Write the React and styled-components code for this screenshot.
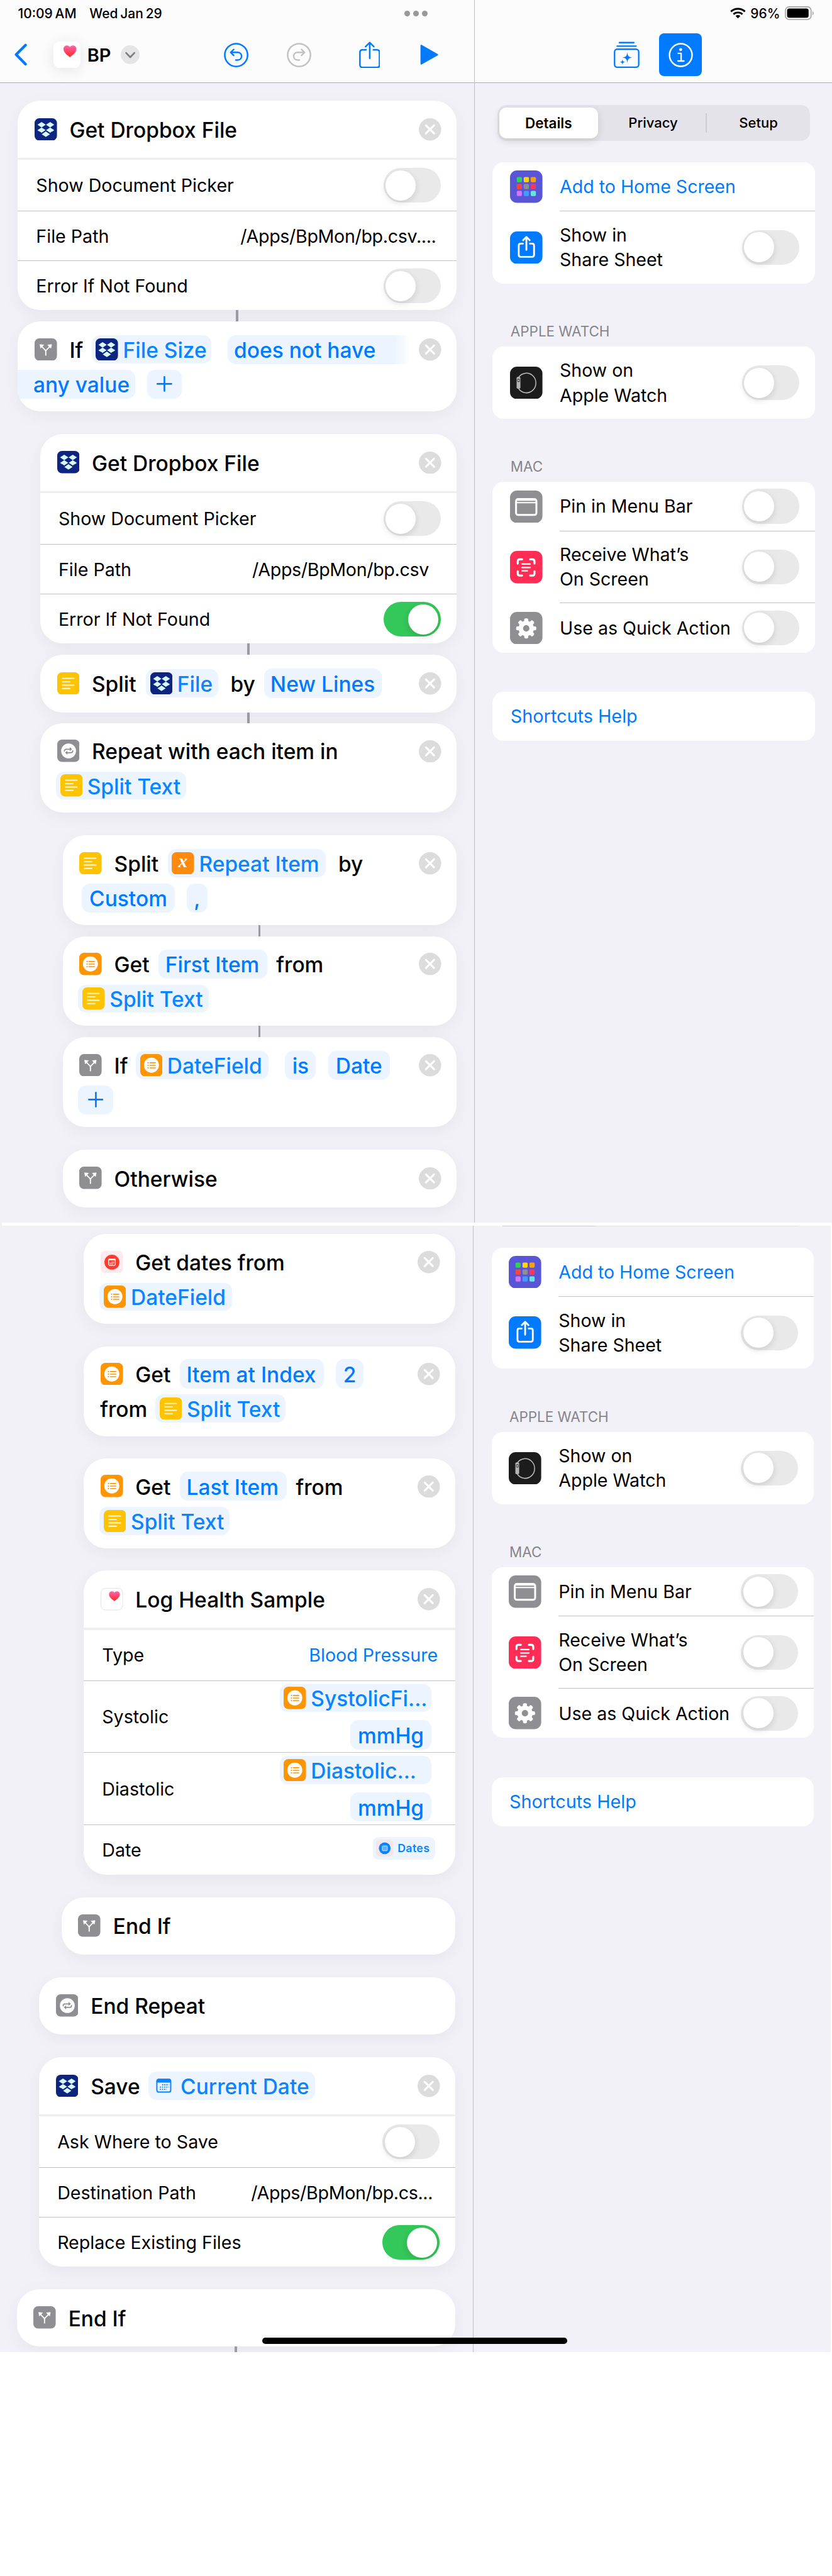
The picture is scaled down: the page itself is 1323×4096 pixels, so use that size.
import React from 'react';
import styled, { createGlobalStyle, css } from 'styled-components';

/* 1rem equals ten design units, so every length below is written in design units. */
const u = (n) => `${n / 10}rem`;

const BLUE = '#007aff';
const PANEL = '#f2f1f7';
const RULE = '#c3c3c7';

const GlobalStyle = createGlobalStyle`
  html { font-size: 8.8911px; }
  body {
    margin: 0;
    background: #fff;
    font-family: Inter, "Liberation Sans", sans-serif;
    color: #000;
    -webkit-font-smoothing: antialiased;
  }
  *, *::before, *::after { box-sizing: border-box; }
  svg { display: block; flex: none; }
`;

/* ---------- Frame ---------- */

const Page = styled.div`
  width: ${u(1488)};
  height: ${u(4606)};
  background: #fff;
`;

const Screen = styled.section`
  position: relative;
  display: flex;
  width: ${(p) => u(p.$w)};
  height: ${(p) => u(p.$h)};
  background: ${PANEL};
  overflow: hidden;
`;

const Seam = styled.div`
  height: ${u(5)};
  border-left: ${u(4)} solid ${PANEL};
  background: #fff;
`;

const Editor = styled.main`
  width: ${(p) => u(p.$w)};
  flex: none;
  display: flex;
  flex-direction: column;
`;

const Inspector = styled.aside`
  flex: 1;
  border-left: 1px solid #bdbdc2;
  display: flex;
  flex-direction: column;
`;

const HomeBar = styled.div`
  position: absolute;
  left: ${u(469)};
  bottom: ${u(15)};
  width: ${u(546)};
  height: ${u(11)};
  border-radius: ${u(6)};
  background: #000;
`;

/* ---------- Top bars ---------- */

const TopBar = styled.header`
  height: ${u(149)};
  flex: none;
  background: #fcfcfd;
  border-bottom: 1px solid #acacb0;
`;

const StatusRow = styled.div`
  height: ${u(48)};
  display: flex;
  align-items: center;
  padding-left: ${(p) => u(p.$pl)};
  font-size: ${u(23.6)};
  font-weight: 500;
  word-spacing: ${(p) => u(p.$tight ? -2 : 0)};
  white-space: nowrap;
`;

const NavRow = styled.div`
  height: ${u(100)};
  display: flex;
  align-items: center;
  padding-left: ${(p) => u(p.$pl)};
`;

const Slot = styled.div`
  width: ${(p) => u(p.$w)};
  margin-left: ${(p) => u(p.$ml || 0)};
  flex: none;
  display: flex;
  white-space: nowrap;
`;

const Dots = styled.div`
  display: flex;
  gap: ${u(6)};
  margin-left: ${u(423)};
  i {
    width: ${u(10)};
    height: ${u(10)};
    border-radius: 50%;
    background: #98989b;
  }
`;

const AppTile = styled.div`
  width: ${u(48)};
  height: ${u(48)};
  margin-left: ${u(47)};
  flex: none;
  border-radius: ${u(10)};
  background: #fff;
  box-shadow: 0 ${u(4)} ${u(24)} rgba(0, 0, 0, 0.1);
`;

const DocName = styled.div`
  width: ${u(61)};
  margin-left: ${u(11)};
  padding: ${u(1)} 0 0 ${u(1)};
  font-size: ${u(32.6)};
  font-weight: 600;
`;

const MenuDot = styled.div`
  width: ${u(34)};
  height: ${u(34)};
  border-radius: 50%;
  background: #e5e5e8;
`;

const InfoButton = styled.div`
  width: ${u(76)};
  height: ${u(76)};
  margin-left: ${u(35)};
  border-radius: ${u(9)};
  background: ${BLUE};
  display: grid;
  place-items: center;
`;

/* ---------- Action cards ---------- */

const Card = styled.article`
  margin: ${(p) => u(p.$mt || 0)} ${u(32)} 0 ${(p) => u(p.$left)};
  height: ${(p) => u(p.$h)};
  padding-top: ${(p) => u(p.$pt || 0)};
  flex: none;
  border-radius: ${u(40)};
  background: #fff;
  box-shadow: 0 ${u(8)} ${u(32)} rgba(20, 20, 50, 0.05);
  overflow: hidden;
`;

const Link = styled.div`
  width: ${u(4)};
  height: ${(p) => u(p.$h || 20)};
  flex: none;
  margin-left: ${(p) => u(p.$x)};
  background: #9a9ba3;
`;

const Line = styled.div`
  height: ${(p) => u(p.$h || 62)};
  display: flex;
  align-items: center;
  padding-left: ${(p) => u(p.$pl ?? 30)};
`;

const Word = styled.span`
  flex: none;
  width: ${(p) => (p.$w ? u(p.$w) : 'auto')};
  margin-left: ${(p) => u(p.$ml ?? 21)};
  padding: ${u(4)} 0 0 ${u(1.2)};
  font-size: ${u(37.7)};
  font-weight: 500;
  line-height: ${u(46)};
  white-space: nowrap;
`;

const Pill = styled.span`
  flex: none;
  display: flex;
  align-items: center;
  justify-content: ${(p) => (p.$center ? 'center' : 'flex-start')};
  gap: ${u(8.5)};
  width: ${(p) => u(p.$w)};
  height: ${(p) => u(p.$icon ? 50 : 52)};
  margin-left: ${(p) => u(p.$ml || 0)};
  padding: ${(p) => u(p.$glyph ? 0 : 3.5)} 0 0 ${(p) => u(p.$center ? 0 : p.$pl ?? (p.$icon ? 7.5 : 11.5))};
  border-radius: ${u(14)};
  background: #ecf5ff;
  color: ${(p) => (p.$icon ? '#0a84ff' : BLUE)};
  font-size: ${u(37.7)};
  font-weight: 500;
  white-space: nowrap;
  svg { margin-top: ${(p) => u(p.$glyph ? 0 : -3.5)}; }
  ${(p) => p.$open === 'right' && css`
    border-radius: ${u(14)} 0 0 ${u(14)};
    background: linear-gradient(90deg, #ecf5ff ${u(300)}, #fff);
  `}
  ${(p) => p.$open === 'left' && css`border-radius: 0 ${u(14)} ${u(14)} 0;`}
`;

const PillLabel = styled.span`
  margin-left: ${u(7.5)};
`;

const SmallPill = styled.span`
  display: flex;
  align-items: center;
  gap: ${u(7)};
  width: ${u(111)};
  height: ${u(40)};
  margin: ${u(-5)} ${u(36)} 0 auto;
  padding-left: ${u(6)};
  border-radius: ${u(10)};
  background: #ecf5ff;
  color: #0a84ff;
  font-size: ${u(20)};
  font-weight: 600;
  letter-spacing: 0.02em;
`;

const CloseWrap = styled.span`
  display: flex;
  margin: ${u(1)} ${u(27)} 0 auto;
`;

const Divider = styled.div`
  height: ${u(4)};
  background: #efeff0;
`;

const Row = styled.div`
  height: ${(p) => u(p.$h)};
  display: flex;
  align-items: center;
  padding-left: ${u(32.5)};
  font-size: ${u(32.2)};
  white-space: nowrap;
  & + & { border-top: 1px solid ${RULE}; }
`;

const Value = styled.span`
  margin-left: auto;
  margin-right: ${(p) => u(p.$mr)};
  color: ${(p) => (p.$blue ? BLUE : '#000')};
  letter-spacing: ${(p) => (p.$blue ? '0' : '-0.012em')};
`;

const Stack = styled.div`
  margin-left: auto;
  margin-right: ${u(42)};
  display: flex;
  flex-direction: column;
  align-items: flex-end;
  gap: ${u(15)};
`;

const Switch = styled.span`
  flex: none;
  width: ${u(102)};
  height: ${u(62)};
  margin-left: auto;
  margin-right: ${u(28)};
  padding: ${u(4)};
  border-radius: ${u(31)};
  background: ${(p) => (p.$on ? '#34c759' : '#e9e9ea')};
  display: flex;
  justify-content: ${(p) => (p.$on ? 'flex-end' : 'flex-start')};
  &::before {
    content: '';
    width: ${u(54)};
    height: ${u(54)};
    border-radius: 50%;
    background: #fff;
    box-shadow: 0 ${u(4)} ${u(12)} rgba(0, 0, 0, 0.13);
  }
`;

/* ---------- Inspector ---------- */

const Tabs = styled.div`
  display: flex;
  width: ${u(560)};
  height: ${u(63.5)};
  margin: ${u(39)} 0 ${u(38.5)} ${u(40)};
  padding: ${u(4)} 0 ${u(4)} ${u(4)};
  border-radius: ${u(16)};
  background: #e4e3e9;
  flex: none;
`;

const Tab = styled.div`
  width: ${(p) => u(p.$w)};
  margin-left: ${(p) => u(p.$ml || 0)};
  display: grid;
  place-items: center;
  font-size: ${(p) => u(p.$active ? 25.3 : 24.8)};
  font-weight: ${(p) => (p.$active ? 600 : 500)};
  ${(p) => p.$active && css`
    border-radius: ${u(13)};
    background: #fff;
    box-shadow: 0 ${u(5)} ${u(14)} rgba(0, 0, 0, 0.12);
  `}
`;

const TabRule = styled.div`
  width: ${u(2)};
  margin: ${u(10)} 0;
  background: #cdccd2;
`;

const Group = styled.div`
  width: ${u(576)};
  margin-left: ${u(32)};
  margin-top: ${(p) => u(p.$mt || 0)};
  border-radius: ${u(20)};
  background: #fff;
  flex: none;
`;

const GroupLabel = styled.div`
  height: ${u(113)};
  padding: ${u(57)} 0 0 ${u(64)};
  display: flex;
  align-items: center;
  font-size: ${u(25.2)};
  color: #85858a;
  flex: none;
`;

const Setting = styled.div`
  display: flex;
  align-items: center;
  height: ${(p) => u(p.$tall ? 129 : 88)};
  padding-left: ${u(31)};
  svg { margin-right: ${u(31)}; }
`;

const SettingBody = styled.div`
  flex: 1;
  height: 100%;
  display: flex;
  align-items: center;
  font-size: ${u(32.1)};
  line-height: ${u(44)};
  white-space: nowrap;
  color: ${(p) => (p.$blue ? BLUE : '#000')};
  ${(p) => p.$rule && css`border-bottom: 1px solid ${RULE};`}
`;

const HelpLink = styled.div`
  height: ${u(88)};
  padding-left: ${u(32)};
  display: flex;
  align-items: center;
  font-size: ${u(32.4)};
  color: ${BLUE};
`;

const ScrollEdge = styled.div`
  width: ${u(530)};
  height: ${u(1)};
  margin: 0 0 ${(p) => u(p.$mb)} ${u(52)};
  flex: none;
  background: linear-gradient(90deg, #c9c8d0 30%, #e1e0e7 32%);
`;

/* ---------- Icons ---------- */

const Svg = styled.svg`
  width: ${(p) => u(p.$w)};
  height: ${(p) => u(p.$h ?? p.$w)};
`;

const Tile = ({ fill, children }) => (
  <Svg $w={40} viewBox="0 0 40 40">
    <rect width="40" height="40" rx="8.5" fill={fill} />
    {children}
  </Svg>
);

const diamond = (x, y) => `M${x - 7.4} ${y}L${x} ${y - 4.9}L${x + 7.4} ${y}L${x} ${y + 4.9}Z`;

const DropboxIcon = () => (
  <Tile fill="#0d2481">
    <path
      fill="#d8f8ff"
      d={[diamond(12.5, 11.6), diamond(27.8, 11.6), diamond(12.5, 21.4), diamond(27.8, 21.4), diamond(20.1, 28.6)].join('')}
    />
    <path d="M9 24.2L12.5 26.6L20.1 21.6L27.8 26.6L31 24.2" fill="none" stroke="#0d2481" strokeWidth="1.1" />
  </Tile>
);

const BranchIcon = () => (
  <Tile fill="#8e8e93">
    <path d="M20 30V23.5C20 19.5 14.5 18.5 12.8 14M20 23.5C20 19.5 25.5 18.5 27.2 14" fill="none" stroke="#fff" strokeWidth="2.1" strokeLinecap="round" />
    <path d="M9.5 11L16.6 11.8L10.8 17.6ZM30.5 11L23.4 11.8L29.2 17.6Z" fill="#fff" stroke="#fff" strokeWidth=".8" strokeLinejoin="round" />
  </Tile>
);

const RepeatIcon = () => (
  <Tile fill="#8e8e93">
    <circle cx="20.3" cy="20.3" r="13.3" fill="#fff" />
    <g fill="none" stroke="#8e8e93" strokeWidth="1.9" strokeLinecap="round" strokeLinejoin="round">
      <path d="M12.8 20.6C12.8 18 14.2 17.2 16 17.2H23.5" />
      <path d="M27.8 20C27.8 22.6 26.4 23.4 24.6 23.4H17" />
    </g>
    <path d="M22.4 13.6L26.6 17.2L22.4 20.6ZM18.2 20L14 23.4L18.2 27Z" fill="#8e8e93" />
  </Tile>
);

const TextIcon = () => (
  <Tile fill="#ffc300">
    <path d="M9.3 10.8H29.8M9.3 17H22.6M9.3 23H29.8M9.3 29H22.6" stroke="#fffbe8" strokeWidth="2.1" strokeLinecap="round" />
  </Tile>
);

const ListIcon = () => (
  <Tile fill="#ff9500">
    <circle cx="20" cy="20" r="13.4" fill="#fff" />
    <path d="M17.4 15.6H27.2M17.4 20.2H27.2M17.4 24.8H27.2" stroke="#ff9500" strokeWidth="1.7" strokeLinecap="round" />
    <path d="M14 15.6h.1M14 20.2h.1M14 24.8h.1" stroke="#ff9500" strokeWidth="2.4" strokeLinecap="round" />
  </Tile>
);

const VariableIcon = () => (
  <Tile fill="#ff8a0e">
    <text x="20" y="27.5" textAnchor="middle" fill="#fff" fontFamily="Liberation Serif, serif" fontStyle="italic" fontWeight="700" fontSize="32">x</text>
  </Tile>
);

const CalendarGlyph = ({ color }) => (
  <>
    <rect x="14.3" y="14.4" width="12" height="11.6" rx="2" fill="none" stroke={color} strokeWidth="1.4" />
    <rect x="14.3" y="14.2" width="12" height="2.6" fill={color} />
    <path d="M19.6 19.4h5.2M16.4 21.5h8.4M16.4 23.6h5.6" stroke={color} strokeWidth="1.3" strokeDasharray="1.3 .8" />
  </>
);

const DatesIcon = () => (
  <Tile fill="#ffeaeb">
    <circle cx="20.2" cy="20.2" r="13.4" fill="#ff3b30" />
    <CalendarGlyph color="#fff" />
  </Tile>
);

const DatesSmallIcon = () => (
  <Svg $w={31} viewBox="0 0 40 40">
    <rect width="40" height="40" rx="8.5" fill="#f5e6ec" />
    <circle cx="20" cy="20" r="13.6" fill="#0a84ff" />
    <rect x="14.4" y="14.6" width="11.6" height="11.2" rx="2.2" fill="#5fb0ff" stroke="#e6f3ff" strokeWidth="1.3" />
  </Svg>
);

const CurrentDateIcon = () => (
  <Svg $w={28} viewBox="0 0 28 28">
    <rect x="1.6" y="2.6" width="24.8" height="22.8" rx="3.4" fill="none" stroke="#0a84ff" strokeWidth="2.2" />
    <path d="M1 8.4V5.2Q1 1.8 4.6 1.8H23.4Q27 1.8 27 5.2V8.4Z" fill="#0a84ff" />
    <path d="M11 12.4H23M7 16.4H23M7 20.4H19" stroke="#0a84ff" strokeWidth="2.1" strokeDasharray="2.1 1.7" />
  </Svg>
);

const HeartPath = ({ id, x, y, w, h }) => (
  <>
    <defs>
      <linearGradient id={id} x1="0" y1="0" x2="0" y2="1">
        <stop offset="0" stopColor="#ff65ae" />
        <stop offset="1" stopColor="#ff2a1c" />
      </linearGradient>
    </defs>
    <path
      transform={`translate(${x} ${y}) scale(${w / 24} ${h / 22})`}
      d="M12 22C9 19.4 0 14 0 6.8C0 2.6 2.9 0 6.2 0C8.8 0 10.8 1.2 12 3.2C13.2 1.2 15.2 0 17.8 0C21.1 0 24 2.6 24 6.8C24 14 15 19.4 12 22Z"
      fill={`url(#${id})`}
    />
  </>
);

const HealthIcon = () => (
  <Svg $w={40} viewBox="0 0 40 40">
    <rect x=".6" y=".6" width="38.8" height="38.8" rx="8.2" fill="#fff" stroke="#e1e1e3" strokeWidth="1.1" />
    <HeartPath id="heart-small" x={15} y={6} w={19.5} h={17.5} />
  </Svg>
);

const CloseIcon = () => (
  <Svg $w={40} viewBox="0 0 40 40">
    <circle cx="20" cy="20" r="20" fill="#dcdcdd" />
    <path d="M12.8 12.8L27.2 27.2M27.2 12.8L12.8 27.2" stroke="#fff" strokeWidth="3.6" strokeLinecap="round" />
  </Svg>
);

const PlusIcon = () => (
  <Svg $w={28} viewBox="0 0 28 28">
    <path d="M14 1.5V26.5M1.5 14H26.5" stroke={BLUE} strokeWidth="3" strokeLinecap="round" />
  </Svg>
);

const BackIcon = () => (
  <Svg $w={23} $h={40} viewBox="0 0 23 40">
    <path d="M19.8 3L3 20L19.8 37" fill="none" stroke={BLUE} strokeWidth="4.8" strokeLinecap="round" strokeLinejoin="round" />
  </Svg>
);

const UndoIcon = ({ color, flip }) => (
  <Svg $w={44} viewBox="0 0 44 44">
    <g transform={flip ? 'translate(44 0) scale(-1 1)' : undefined} fill="none" stroke={color} strokeLinecap="round" strokeLinejoin="round">
      <circle cx="22" cy="22" r="20.4" strokeWidth="2.8" />
      <path d="M17.6 12L12.2 17.2L17.6 22.6M12.6 17.2H24.6C29 17.2 31.6 20.2 31.6 24C31.6 28 29 31 24.6 31H21.4" strokeWidth="2.7" />
    </g>
  </Svg>
);

const ShareIcon = () => (
  <Svg $w={38} $h={48} viewBox="0 0 38 48">
    <g fill="none" stroke={BLUE} strokeWidth="2.8" strokeLinecap="round" strokeLinejoin="round">
      <path d="M12.5 14.8H6Q1.5 14.8 1.5 19.3V42Q1.5 46.4 6 46.4H32Q36.5 46.4 36.5 42V19.3Q36.5 14.8 32 14.8H25.5" />
      <path d="M19 30V2.2M11.6 9.2L19 1.8L26.4 9.2" />
    </g>
  </Svg>
);

const PlayIcon = () => (
  <Svg $w={33} $h={38} viewBox="0 0 33 38">
    <path d="M2 2.6L31 19L2 35.4Z" fill={BLUE} stroke={BLUE} strokeWidth="2.6" strokeLinejoin="round" />
  </Svg>
);

const ChevronDown = () => (
  <Svg $w={34} viewBox="0 0 34 34">
    <path d="M9.6 13.6L17 21.4L24.4 13.6" fill="none" stroke="#7d7d82" strokeWidth="3" strokeLinecap="round" strokeLinejoin="round" />
  </Svg>
);

const WifiIcon = () => (
  <Svg $w={28} $h={20} viewBox="0 0 28 20">
    <g fill="none" stroke="#000" strokeWidth="3.3">
      <path d="M1.4 7.2C8.2 .6 19.8 .6 26.6 7.2" />
      <path d="M6 12C10.4 7.8 17.6 7.8 22 12" />
    </g>
    <path d="M14 19.4L9.8 15.1C12.2 12.9 15.8 12.9 18.2 15.1Z" fill="#000" />
  </Svg>
);

const BatteryIcon = () => (
  <Svg $w={53} $h={25} viewBox="0 0 53 25">
    <rect x="1" y="1" width="46" height="22.6" rx="6.5" fill="none" stroke="#a0a0a2" strokeWidth="1.8" />
    <rect x="4" y="4" width="38.5" height="16.6" rx="4" fill="#000" />
    <path d="M49.6 8.6C52 9.6 52 15 49.6 16Z" fill="#a0a0a2" />
  </Svg>
);

const GalleryIcon = () => (
  <Svg $w={46} $h={48} viewBox="0 0 46 48">
    <rect x="1.4" y="13.8" width="43.2" height="32.2" rx="4.6" fill="none" stroke={BLUE} strokeWidth="2.6" />
    <path d="M6 8.2H40M10 2H36" stroke={BLUE} strokeWidth="2.6" strokeLinecap="round" />
    <path d="M24.2 18.8C25 26.2 26.4 27.8 33.6 28.8C26.4 29.8 25 31.4 24.2 38.8C23.4 31.4 22 29.8 14.8 28.8C22 27.8 23.4 26.2 24.2 18.8ZM15.6 31.6C16 35.4 16.8 36.2 20.4 36.8C16.8 37.4 16 38.2 15.6 42C15.2 38.2 14.4 37.4 10.8 36.8C14.4 36.2 15.2 35.4 15.6 31.6Z" fill={BLUE} />
  </Svg>
);

const InfoIcon = () => (
  <Svg $w={44} viewBox="0 0 44 44">
    <circle cx="22" cy="22" r="20.2" fill="none" stroke="#fff" strokeWidth="2.8" />
    <circle cx="21.8" cy="12.2" r="2.7" fill="#fff" />
    <path d="M17.4 19H22.6V32.6M16.8 32.6H27.6" fill="none" stroke="#fff" strokeWidth="2.6" strokeLinecap="round" strokeLinejoin="round" />
  </Svg>
);

const BigTile = ({ fill, children }) => (
  <Svg $w={58} viewBox="0 0 58 58">
    <rect width="58" height="58" rx="12.5" fill={fill} />
    {children}
  </Svg>
);

const HOME_COLORS = ['#30d158', '#ffd60a', '#ff9f0a', '#ff453a', '#8e8e93', '#ff375f', '#d177ff', '#409cff', '#66e6de'];

const HomeIcon = () => (
  <BigTile fill="#5856d6">
    {HOME_COLORS.map((c, i) => (
      <rect key={c} x={12.1 + (i % 3) * 12.5} y={11.8 + Math.floor(i / 3) * 12.4} width="9.2" height="9.2" rx="2" fill={c} />
    ))}
  </BigTile>
);

const SheetIcon = () => (
  <BigTile fill={BLUE}>
    <g fill="none" stroke="#fff" strokeWidth="3.2" strokeLinecap="round" strokeLinejoin="round">
      <path d="M23 21.8H19Q15.6 21.8 15.6 25.2V42Q15.6 45.4 19 45.4H39.6Q43 45.4 43 42V25.2Q43 21.8 39.6 21.8H35.6" />
      <path d="M29.3 33V10.6M23.4 15.8L29.3 9.8L35.2 15.8" />
    </g>
  </BigTile>
);

const WatchIcon = () => (
  <BigTile fill="#1c1c1d">
    <path d="M15.4 19A17 17.6 0 1 1 15.4 39.4" fill="none" stroke="#bdbdbd" strokeWidth="1.7" />
    <rect x="11.8" y="18.4" width="6.8" height="21" rx="2" fill="#b4b4b4" />
    <rect x="13" y="21.6" width="4.6" height="6" rx="1.6" fill="#4a4a4a" />
    <circle cx="15.3" cy="24.6" r="1.4" fill="#ccc" />
  </BigTile>
);

const MenuBarIcon = () => (
  <BigTile fill="#8e8e93">
    <rect x="10.8" y="15.2" width="36.4" height="28.4" rx="3.6" fill="none" stroke="#fff" strokeWidth="3.4" />
    <path d="M11 17H47M11 21.6H47" stroke="#fff" strokeWidth="2.3" />
  </BigTile>
);

const ScanIcon = () => (
  <BigTile fill="#ff2d55">
    <path d="M13.8 22.6V18.6Q13.8 15 17.4 15H21.6M36 15H40.2Q43.8 15 43.8 18.6V22.6M43.8 36.4V40.4Q43.8 44 40.2 44H36M21.6 44H17.4Q13.8 44 13.8 40.4V36.4" fill="none" stroke="#fff" strokeWidth="3.5" strokeLinecap="round" />
    <path d="M21.4 23.4H36M21.4 29.6H36M21.4 35.6H31" stroke="#fff" strokeWidth="2.5" strokeLinecap="round" />
  </BigTile>
);

const GearIcon = () => (
  <BigTile fill="#8e8e93">
    <circle cx="29" cy="29.4" r="9.7" fill="none" stroke="#fff" strokeWidth="8" />
    {[0, 45, 90, 135, 180, 225, 270, 315].map((a) => (
      <rect key={a} x="25.4" y="11.4" width="7.2" height="7" rx="2.4" fill="#fff" transform={`rotate(${a} 29 29.4)`} />
    ))}
  </BigTile>
);

/* ---------- Composed parts ---------- */

const Close = () => (
  <CloseWrap>
    <CloseIcon />
  </CloseWrap>
);

const TitleCard = ({ left, mt, icon, title, closable }) => (
  <Card $left={left} $mt={mt} $h={103}>
    <Line $h={102}>
      {icon}
      <Word>{title}</Word>
      {closable && <Close />}
    </Line>
  </Card>
);

const ROW_HEIGHTS = [91, 89, 90];

const FormCard = ({ left, mt, head, rows }) => (
  <Card $left={left} $mt={mt} $h={375}>
    <Line $h={102}>
      {head}
      <Close />
    </Line>
    <Divider />
    {rows.map((r, i) => (
      <Row key={r.label} $h={ROW_HEIGHTS[i]}>
        {r.label}
        {r.value ? <Value $mr={r.mr}>{r.value}</Value> : <Switch $on={r.on} />}
      </Row>
    ))}
  </Card>
);

const TwoLineCard = ({ left, mt, h = 161, pt = 19, first, second, secondPl }) => (
  <Card $left={left} $mt={mt} $h={h} $pt={pt}>
    <Line>
      {first}
      <Close />
    </Line>
    <Line $pl={secondPl}>{second}</Line>
  </Card>
);

const Reading = ({ label, name }) => (
  <Row $h={129}>
    {label}
    <Stack>
      <Pill $icon $w={272}>
        <ListIcon />
        {name}
      </Pill>
      <Pill $w={146} $center>mmHg</Pill>
    </Stack>
  </Row>
);

const SettingRow = ({ icon, tall, rule, blue, noSwitch, children }) => (
  <Setting $tall={tall}>
    {icon}
    <SettingBody $rule={rule} $blue={blue}>
      <div>{children}</div>
      {!noSwitch && <Switch />}
    </SettingBody>
  </Setting>
);

const Settings = () => (
  <>
    <Group>
      <SettingRow icon={<HomeIcon />} rule blue noSwitch>Add to Home Screen</SettingRow>
      <SettingRow icon={<SheetIcon />} tall>Show in<br />Share Sheet</SettingRow>
    </Group>
    <GroupLabel>APPLE WATCH</GroupLabel>
    <Group>
      <SettingRow icon={<WatchIcon />} tall>Show on<br />Apple Watch</SettingRow>
    </Group>
    <GroupLabel>MAC</GroupLabel>
    <Group>
      <SettingRow icon={<MenuBarIcon />} rule>Pin in Menu Bar</SettingRow>
      <SettingRow icon={<ScanIcon />} tall rule>Receive What’s<br />On Screen</SettingRow>
      <SettingRow icon={<GearIcon />}>Use as Quick Action</SettingRow>
    </Group>
    <Group $mt={70}>
      <HelpLink>Shortcuts Help</HelpLink>
    </Group>
  </>
);

const SplitTextPill = () => (
  <Pill $icon $w={233}>
    <TextIcon />
    Split Text
  </Pill>
);

const DateFieldPill = () => (
  <Pill $icon $w={237}>
    <ListIcon />
    DateField
  </Pill>
);

const AddPill = ({ ml }) => (
  <Pill $w={62} $ml={ml} $center $glyph>
    <PlusIcon />
  </Pill>
);

const UpperScreen = () => (
  <Screen $w={1488} $h={2187}>
    <Editor $w={848}>
      <TopBar>
        <StatusRow $pl={32} $tight>
          <Slot $w={128}>10:09 AM</Slot>
          <Slot $w={140}>Wed Jan 29</Slot>
          <Dots><i /><i /><i /></Dots>
        </StatusRow>
        <NavRow $pl={26}>
          <BackIcon />
          <AppTile>
            <Svg $w={48} viewBox="0 0 48 48">
              <HeartPath id="heart-large" x={18} y={7} w={23} h={21} />
            </Svg>
          </AppTile>
          <DocName>BP</DocName>
          <MenuDot><ChevronDown /></MenuDot>
          <Slot $w={44} $ml={151}><UndoIcon color={BLUE} /></Slot>
          <Slot $w={44} $ml={68}><UndoIcon color="#c2c2c5" flip /></Slot>
          <Slot $w={38} $ml={85}><ShareIcon /></Slot>
          <Slot $w={33} $ml={71}><PlayIcon /></Slot>
        </NavRow>
      </TopBar>

      <FormCard
        left={32}
        mt={31}
        head={<><DropboxIcon /><Word>Get Dropbox File</Word></>}
        rows={[
          { label: 'Show Document Picker' },
          { label: 'File Path', value: '/Apps/BpMon/bp.csv....', mr: 36 },
          { label: 'Error If Not Found' },
        ]}
      />
      <Link $x={422} />
      <TwoLineCard
        left={32}
        first={
          <>
            <BranchIcon />
            <Word $w={41}>If</Word>
            <Pill $icon $w={214}><DropboxIcon />File Size</Pill>
            <Pill $w={326} $ml={29} $open="right">does not have</Pill>
          </>
        }
        second={
          <>
            <Pill $w={210} $pl={27.5} $open="left">any value</Pill>
            <AddPill ml={21} />
          </>
        }
        secondPl={0}
      />
      <FormCard
        left={72}
        mt={40}
        head={<><DropboxIcon /><Word>Get Dropbox File</Word></>}
        rows={[
          { label: 'Show Document Picker' },
          { label: 'File Path', value: '/Apps/BpMon/bp.csv', mr: 49 },
          { label: 'Error If Not Found', on: true },
        ]}
      />
      <Link $x={442} />
      <Card $left={72} $h={103}>
        <Line $h={102}>
          <TextIcon />
          <Word $w={98}>Split</Word>
          <Pill $icon $w={129}><DropboxIcon />File</Pill>
          <Word $w={61}>by</Word>
          <Pill $w={211}>New Lines</Pill>
          <Close />
        </Line>
      </Card>
      <Link $x={442} />
      <TwoLineCard
        left={72}
        h={159.5}
        pt={18}
        first={<><RepeatIcon /><Word>Repeat with each item in</Word></>}
        second={<SplitTextPill />}
        secondPl={28}
      />
      <TwoLineCard
        left={112}
        mt={40.5}
        first={
          <>
            <TextIcon />
            <Word $w={97}>Split</Word>
            <Pill $icon $w={283}><VariableIcon />Repeat Item</Pill>
            <Word>by</Word>
          </>
        }
        second={
          <>
            <Pill $w={167} $center>Custom</Pill>
            <Pill $w={37} $ml={21} $center>,</Pill>
          </>
        }
        secondPl={34}
      />
      <Link $x={462} />
      <TwoLineCard
        left={112}
        h={160}
        pt={18}
        first={
          <>
            <ListIcon />
            <Word $w={81}>Get</Word>
            <Pill $w={194}>First Item</Pill>
            <Word $ml={15}>from</Word>
          </>
        }
        second={<SplitTextPill />}
        secondPl={28}
      />
      <Link $x={462} />
      <TwoLineCard
        left={112}
        first={
          <>
            <BranchIcon />
            <Word $w={40}>If</Word>
            <DateFieldPill />
            <Pill $w={55} $ml={30} $center>is</Pill>
            <Pill $w={110} $ml={22} $center>Date</Pill>
          </>
        }
        second={<AddPill />}
        secondPl={28}
      />
      <TitleCard left={112} mt={40} icon={<BranchIcon />} title="Otherwise" closable />
    </Editor>

    <Inspector>
      <TopBar>
        <StatusRow $pl={457}>
          <WifiIcon />
          <Slot $w={62} $ml={8}>96%</Slot>
          <BatteryIcon />
        </StatusRow>
        <NavRow $pl={249}>
          <GalleryIcon />
          <InfoButton><InfoIcon /></InfoButton>
        </NavRow>
      </TopBar>
      <Tabs>
        <Tab $w={176} $active>Details</Tab>
        <Tab $w={188} $ml={5}>Privacy</Tab>
        <TabRule />
        <Tab $w={185}>Setup</Tab>
      </Tabs>
      <Settings />
    </Inspector>
  </Screen>
);

const LowerScreen = () => (
  <Screen $w={1486} $h={2015}>
    <Editor $w={846}>
      <TwoLineCard
        left={150}
        mt={15}
        first={<><DatesIcon /><Word>Get dates from</Word></>}
        second={<DateFieldPill />}
        secondPl={28}
      />
      <TwoLineCard
        left={150}
        mt={40}
        h={160.5}
        pt={18}
        first={
          <>
            <ListIcon />
            <Word $w={81}>Get</Word>
            <Pill $w={257}>Item at Index</Pill>
            <Pill $w={49} $ml={22} $center>2</Pill>
          </>
        }
        second={<><Word $w={100} $ml={0}>from</Word><SplitTextPill /></>}
        secondPl={28}
      />
      <TwoLineCard
        left={150}
        mt={39.5}
        first={
          <>
            <ListIcon />
            <Word $w={81}>Get</Word>
            <Pill $w={191}>Last Item</Pill>
            <Word $ml={15}>from</Word>
          </>
        }
        second={<SplitTextPill />}
        secondPl={28}
      />
      <Card $left={150} $mt={40} $h={543.5}>
        <Line $h={102}>
          <HealthIcon />
          <Word>Log Health Sample</Word>
          <Close />
        </Line>
        <Divider />
        <Row $h={90}>
          Type
          <Value $mr={31} $blue>Blood Pressure</Value>
        </Row>
        <Reading label="Systolic" name="SystolicFi..." />
        <Reading label="Diastolic" name="Diastolic..." />
        <Row $h={89}>
          Date
          <SmallPill><DatesSmallIcon />Dates</SmallPill>
        </Row>
      </Card>
      <TitleCard left={110} mt={40.5} icon={<BranchIcon />} title="End If" />
      <TitleCard left={70} mt={40} icon={<RepeatIcon />} title="End Repeat" />
      <FormCard
        left={70}
        mt={40}
        head={
          <>
            <DropboxIcon />
            <Word $w={105}>Save</Word>
            <Pill $icon $w={298} $pl={13}>
              <CurrentDateIcon />
              <PillLabel>Current Date</PillLabel>
            </Pill>
          </>
        }
        rows={[
          { label: 'Ask Where to Save' },
          { label: 'Destination Path', value: '/Apps/BpMon/bp.cs...', mr: 40 },
          { label: 'Replace Existing Files', on: true },
        ]}
      />
      <TitleCard left={30} mt={40} icon={<BranchIcon />} title="End If" />
      <Link $x={420} $h={12} />
    </Editor>

    <Inspector>
      <ScrollEdge $mb={38} />
      <Settings />
    </Inspector>

    <HomeBar />
  </Screen>
);

export default function App() {
  return (
    <Page>
      <GlobalStyle />
      <UpperScreen />
      <Seam />
      <LowerScreen />
    </Page>
  );
}
